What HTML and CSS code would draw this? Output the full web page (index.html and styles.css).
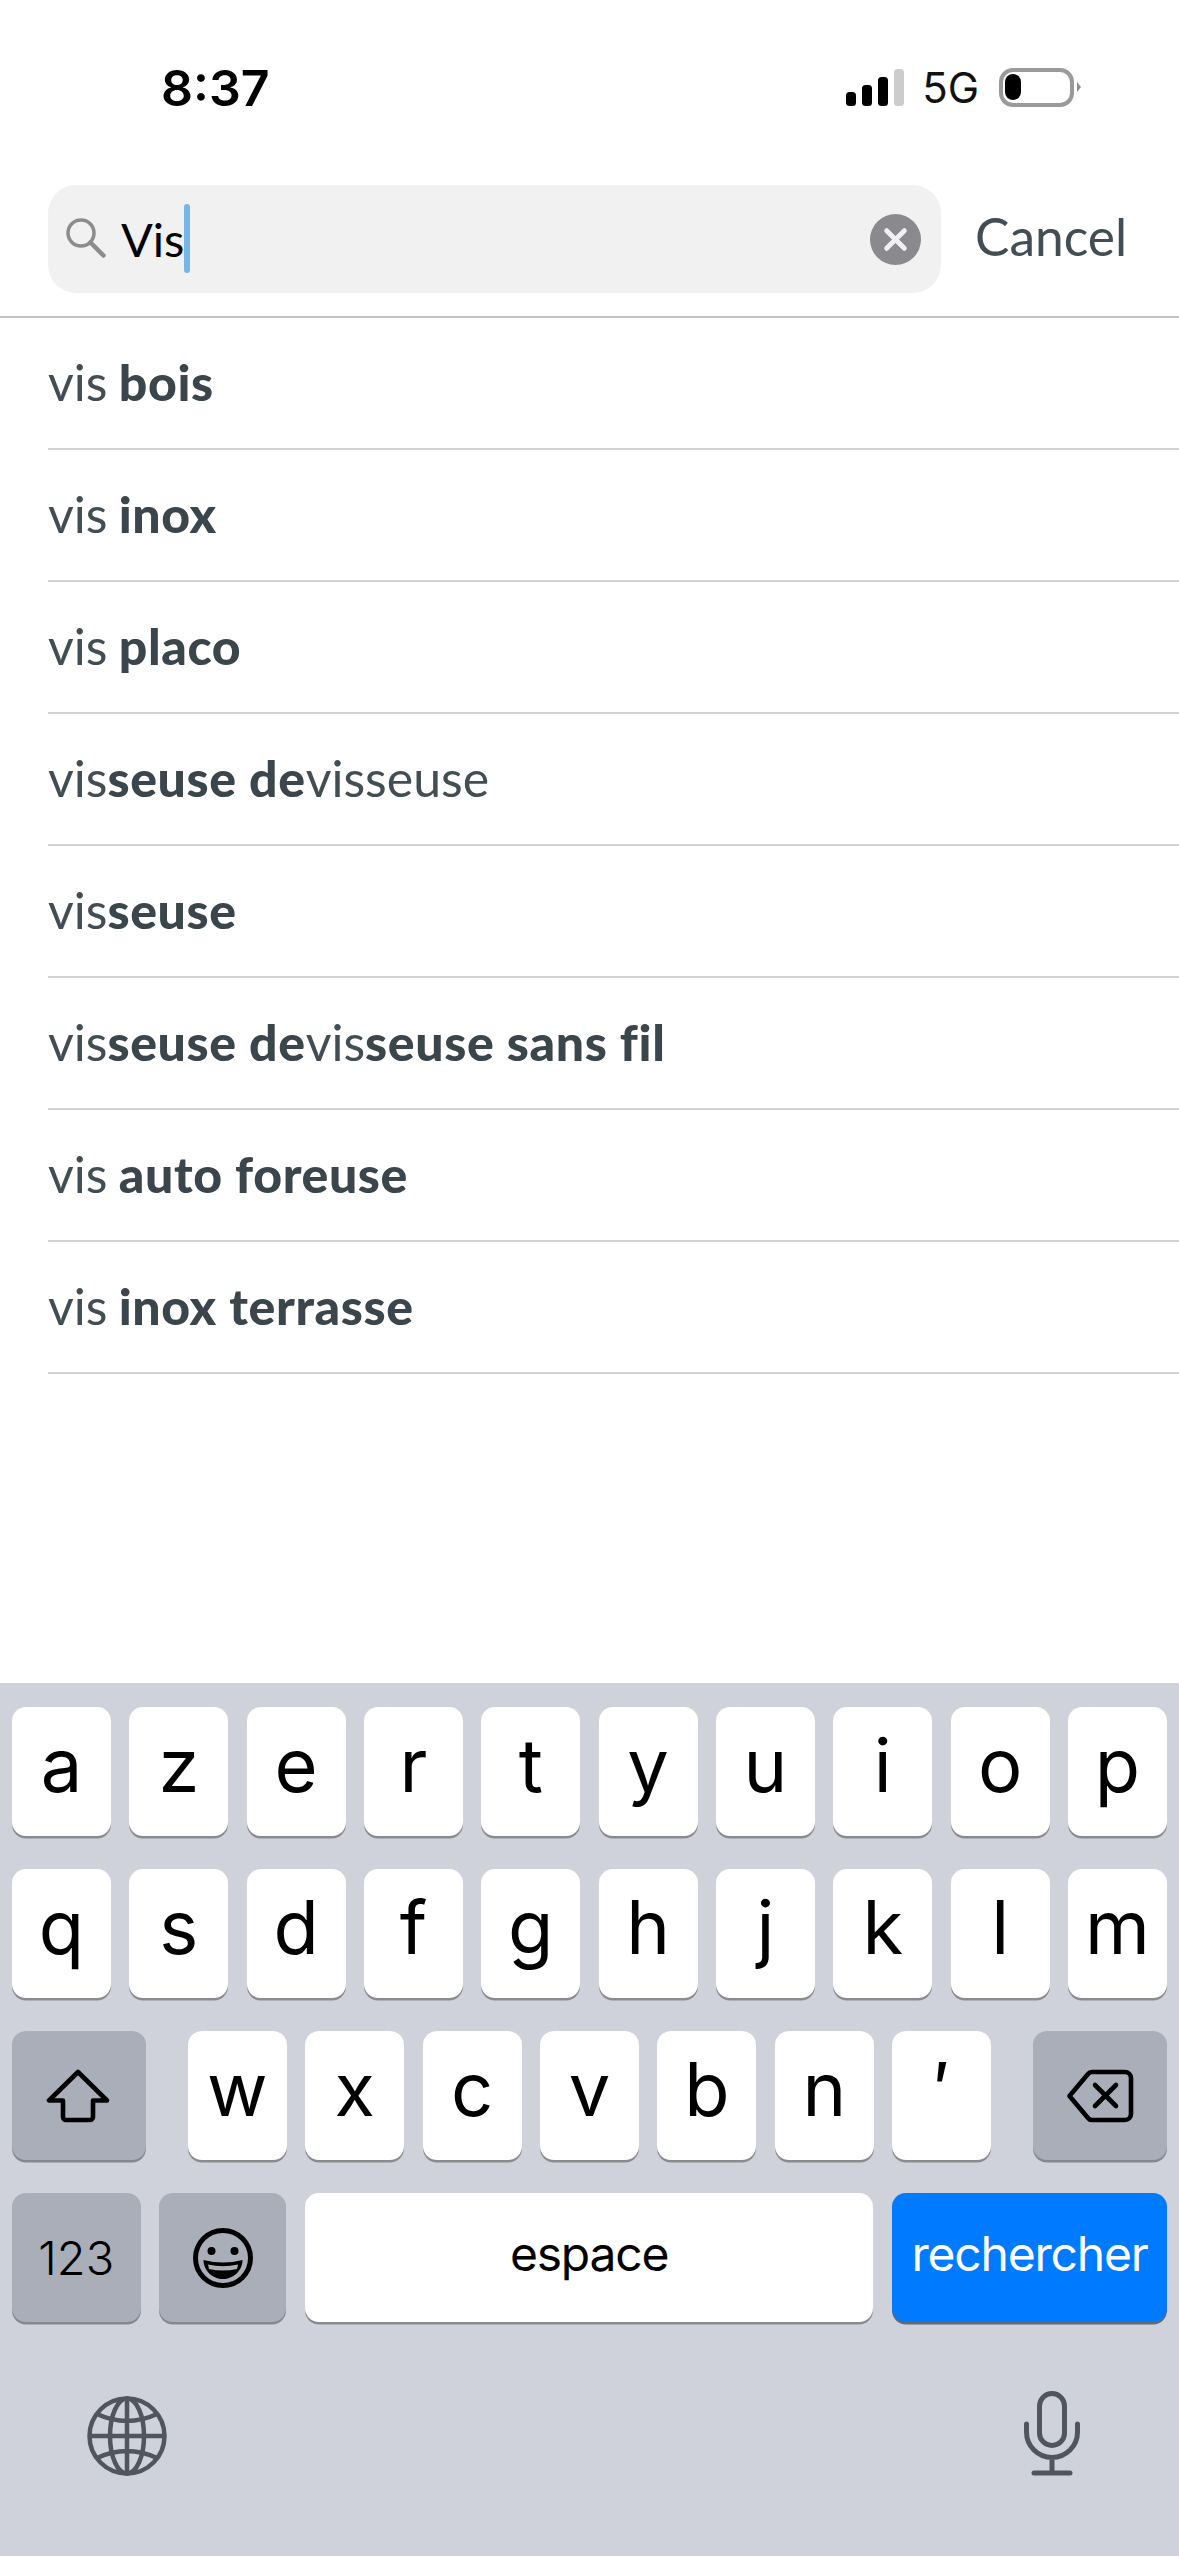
FILE: index.html
```html
<!DOCTYPE html>
<html lang="fr">
<head>
<meta charset="utf-8">
<title>Recherche</title>
<link rel="stylesheet" href="styles.css">
</head>
<body>
<div class="screen">
  <header class="status">
    <span class="time">8:37</span>
    <div class="indicators">
      <div class="signal"><i class="bar b1"></i><i class="bar b2"></i><i class="bar b3"></i><i class="bar b4"></i></div>
      <span class="net">5G</span>
      <div class="battery"><div class="battery-body"><i class="battery-fill"></i></div><i class="battery-nub"></i></div>
    </div>
  </header>
  <div class="search-row">
    <div class="search-bar">
      <svg class="mag" viewBox="0 0 40 40" width="40" height="40"><circle cx="15" cy="15" r="13" fill="none" stroke="#8c8c8c" stroke-width="3.5"/><path d="M24.5 24.5 L37.5 37.5" stroke="#8c8c8c" stroke-width="4.5" stroke-linecap="round"/></svg>
      <span class="query">Vis</span><i class="caret"></i>
      <svg class="clear" viewBox="0 0 52 52" width="51" height="51"><circle cx="26" cy="26" r="26" fill="#8a8a8e"/><path d="M17 17 L35 35 M35 17 L17 35" stroke="#f1f1f1" stroke-width="5" stroke-linecap="round"/></svg>
    </div>
    <span class="cancel">Cancel</span>
  </div>
  <ul class="results">
    <li class="result">vis <b>bois</b></li>
    <li class="result">vis <b>inox</b></li>
    <li class="result">vis <b>placo</b></li>
    <li class="result">vis<b>seuse de</b>visseuse</li>
    <li class="result">vis<b>seuse</b></li>
    <li class="result">vis<b>seuse de</b>vis<b>seuse sans fil</b></li>
    <li class="result">vis <b>auto foreuse</b></li>
    <li class="result">vis <b>inox terrasse</b></li>
  </ul>
  <div class="keyboard">
    <div class="row">
      <div class="key">a</div><div class="key">z</div><div class="key">e</div><div class="key">r</div><div class="key">t</div><div class="key">y</div><div class="key">u</div><div class="key">i</div><div class="key">o</div><div class="key">p</div>
    </div>
    <div class="row">
      <div class="key">q</div><div class="key">s</div><div class="key">d</div><div class="key">f</div><div class="key">g</div><div class="key">h</div><div class="key">j</div><div class="key">k</div><div class="key">l</div><div class="key">m</div>
    </div>
    <div class="row">
      <div class="key special wide">
        <svg class="shift" viewBox="0 0 64 54" width="64" height="54"><path d="M32 3 L3 31.5 H17 V48 a3 3 0 0 0 3 3 H44 a3 3 0 0 0 3-3 V31.5 H61 Z" fill="none" stroke="#000" stroke-width="4.6" stroke-linejoin="round"/></svg>
      </div>
      <div class="letters">
        <div class="key">w</div><div class="key">x</div><div class="key">c</div><div class="key">v</div><div class="key">b</div><div class="key">n</div><div class="key">′</div>
      </div>
      <div class="key special wide">
        <svg viewBox="0 0 68 54" width="68" height="54"><path d="M3.5 27 L22 5 a5 5 0 0 1 4-2 H59 a6 6 0 0 1 6 6 V45 a6 6 0 0 1-6 6 H26 a5 5 0 0 1-4-2 Z" fill="none" stroke="#000" stroke-width="4.6" stroke-linejoin="round"/><path d="M29 16 L50 37 M50 16 L29 37" stroke="#000" stroke-width="4.6" stroke-linecap="round"/></svg>
      </div>
    </div>
    <div class="row bottom-row">
      <div class="key special k123">123</div>
      <div class="key special kemoji">
        <svg viewBox="0 0 60 60" width="60" height="60"><ellipse cx="30" cy="30" rx="27.5" ry="27.5" fill="none" stroke="#000" stroke-width="5"/><circle cx="18.5" cy="23" r="4" fill="#000"/><circle cx="41.5" cy="23" r="4" fill="#000"/><path d="M10.5 32 Q30 37 49.5 32 C49.5 43 40 51 30 51 C20 51 10.5 43 10.5 32 Z" fill="#000"/><path d="M15 36.5 Q30 40 45 36.5 L44 41 Q30 44 16 41 Z" fill="#a9aeb9"/></svg>
      </div>
      <div class="key space">espace</div>
      <div class="key go">rechercher</div>
    </div>
    <div class="sys-row">
      <svg viewBox="0 0 80 80" width="80" height="80" fill="none" stroke="#50555e" stroke-width="4.5"><circle cx="40" cy="40" r="37.5"/><ellipse cx="40" cy="40" rx="17" ry="37.5"/><path d="M40 2.5 V77.5 M2.5 40 H77.5 M10 18 Q40 32 70 18 M10 62 Q40 48 70 62"/></svg>
      <svg viewBox="0 0 56 85" width="56" height="85" fill="none" stroke="#50555e" stroke-width="5" stroke-linecap="round"><rect x="15.5" y="2.5" width="25" height="52" rx="12.5"/><path d="M2.5 33 V41 a25.5 25.5 0 0 0 51 0 V33 M28 67 V82 M10 82 H46"/></svg>
    </div>
  </div>
</div>
</body>
</html>
```
FILE: styles.css
```css
* { box-sizing: border-box; }
html, body { margin: 0; padding: 0; background: #fff; }
.screen {
  width: 1179px;
  height: 2556px;
  display: flex;
  flex-direction: column;
  overflow: hidden;
  font-family: "Inter", "Liberation Sans", sans-serif;
}
.status {
  height: 185px;
  flex: none;
  display: flex;
  justify-content: space-between;
  align-items: flex-start;
  padding: 58px 98px 0 161px;
}
.time { font-size: 50px; line-height: 60px; font-weight: 600; color: #000; }
.indicators { display: flex; align-items: flex-end; height: 48px; }
.signal { display: flex; align-items: flex-end; gap: 6px; margin-right: 18px; }
.bar { display: block; width: 10px; border-radius: 3.5px; background: #000; }
.b1 { height: 14px; }
.b2 { height: 21px; }
.b3 { height: 29px; }
.b4 { height: 37px; background: #cccccc; }
.net { font-size: 42px; line-height: 40px; color: #111; margin-right: 20px; margin-bottom: -2px; }
.battery { display: flex; align-items: center; }
.battery-body {
  width: 75px;
  height: 39px;
  border: 4px solid #9a9a9a;
  border-radius: 14px;
  padding: 2px;
  margin-bottom: -1px;
}
.battery-fill { display: block; width: 16px; height: 26px; background: #000; border-radius: 8px; }
.battery-nub {
  display: block;
  width: 0;
  height: 0;
  margin-left: 3px;
  border-left: 4px solid #8f8f8f;
  border-top: 5px solid transparent;
  border-bottom: 5px solid transparent;
}
.search-row {
  height: 133px;
  flex: none;
  display: flex;
  align-items: flex-start;
  padding-left: 48px;
  border-bottom: 2px solid #c4c4c4;
}
.search-bar {
  width: 893px;
  height: 108px;
  display: flex;
  align-items: center;
  background: #f1f1f1;
  border-radius: 28px;
  padding: 0 20px 0 18px;
}
.mag { flex: none; margin-right: 15px; margin-top: -2px; }
.query {
  font-family: "Lato", sans-serif;
  font-size: 47px;
  line-height: 60px;
  color: #000;
}
.caret {
  display: block;
  width: 6px;
  height: 69px;
  margin-top: -1px;
  border-radius: 3px;
  background: #78b4e6;
}
.clear { flex: none; margin-left: auto; }
.cancel {
  font-family: "Lato", sans-serif;
  font-weight: 400;
  font-size: 51.5px;
  line-height: 102px;
  margin-left: 34px;
  color: #434e54;
}
.results {
  list-style: none;
  margin: 0;
  padding: 0 0 0 48px;
  flex: none;
}
.result {
  height: 132px;
  border-bottom: 2px solid #d2d3d4;
  font-family: "Lato", sans-serif;
  font-weight: 400;
  font-size: 50px;
  line-height: 128px;
  color: #434e54;
  white-space: pre-wrap;
  word-spacing: -1.5px;
  font-variant-ligatures: none;
}
.result b { font-weight: 900; color: #3b464c; letter-spacing: 0.6px; word-spacing: 0; }
.keyboard {
  margin-top: auto;
  height: 873px;
  flex: none;
  background: #cfd2da;
  padding-top: 24px;
}
.row {
  display: flex;
  justify-content: space-between;
  height: 131px;
  margin-bottom: 31px;
  padding: 0 12px;
}
.letters { display: flex; gap: 18.4px; }
.key {
  width: 99px;
  height: 129px;
  flex: none;
  display: flex;
  align-items: center;
  justify-content: center;
  background: #fff;
  border-radius: 14px;
  box-shadow: 0 2.5px 0 #8a8b90;
  color: #000;
  font-size: 74px;
  font-weight: 380;
  line-height: 90px;
  padding-bottom: 14px;
}
.special { background: #a9aeb9; box-shadow: 0 2.5px 0 #85888f; padding-bottom: 0; }
.shift { margin-left: -2px; }
.wide { width: 134px; }
.bottom-row { justify-content: flex-start; gap: 18.6px; margin-bottom: 0; }
.k123 { width: 128.5px; font-size: 47px; line-height: 60px; font-weight: 300; }
.kemoji { width: 127px; }
.space {
  flex: 1;
  font-size: 48px;
  font-weight: 400;
  letter-spacing: -1.2px;
  line-height: 60px;
  padding-bottom: 8px;
}
.go {
  width: 275px;
  background: #007aff;
  color: #fff;
  box-shadow: 0 2.5px 0 #5f6a78;
  font-size: 48px;
  font-weight: 400;
  letter-spacing: -1.2px;
  line-height: 60px;
  padding-bottom: 8px;
}
.sys-row {
  display: flex;
  justify-content: space-between;
  align-items: flex-end;
  margin-top: 67px;
  height: 85px;
  padding: 0 99px 0 87px;
}
```
